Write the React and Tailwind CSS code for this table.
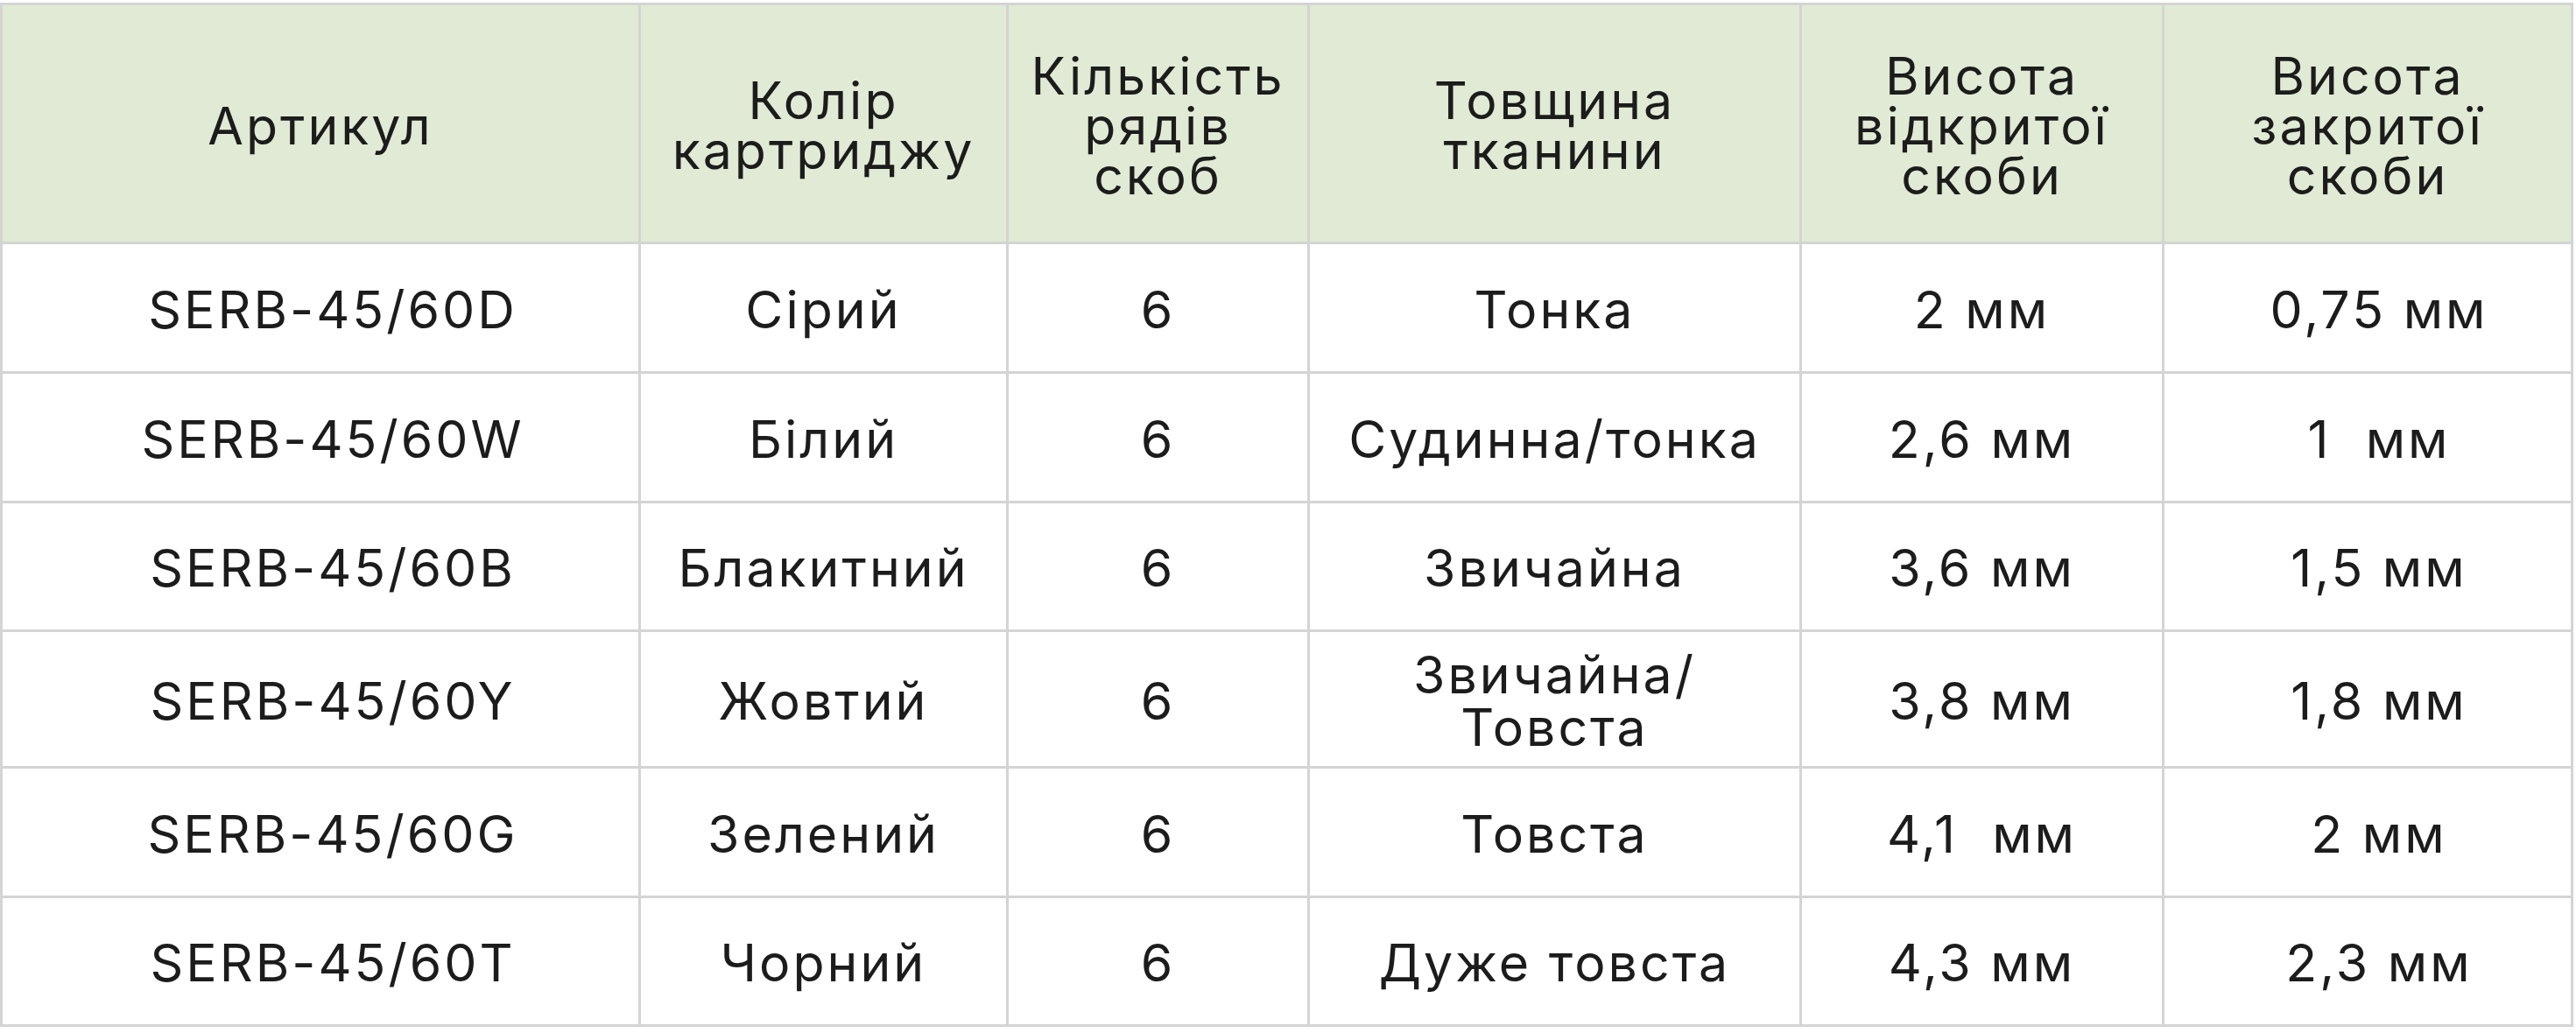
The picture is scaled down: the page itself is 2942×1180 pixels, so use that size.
import React from 'react';

const HEADERS = [
  ['Артикул'],
  ['Колір', 'картриджу'],
  ['Кількість', 'рядів', 'скоб'],
  ['Товщина', 'тканини'],
  ['Висота', 'відкритої', 'скоби'],
  ['Висота', 'закритої', 'скоби'],
];

const ROWS = [
  ['SERB-45/60D', 'Сірий', '6', ['Тонка'], '2 мм', '0,75 мм'],
  ['SERB-45/60W', 'Білий', '6', ['Судинна/тонка'], '2,6 мм', '1  мм'],
  ['SERB-45/60B', 'Блакитний', '6', ['Звичайна'], '3,6 мм', '1,5 мм'],
  ['SERB-45/60Y', 'Жовтий', '6', ['Звичайна/', 'Товста'], '3,8 мм', '1,8 мм'],
  ['SERB-45/60G', 'Зелений', '6', ['Товста'], '4,1  мм', '2 мм'],
  ['SERB-45/60T', 'Чорний', '6', ['Дуже товста'], '4,3 мм', '2,3 мм'],
];

// offsets seen in the source table: first and last data columns sit a bit right of centre
const DATA_PAD = ['pl-[28px]', '', '', '', '', 'pl-[26px]'];

export default function App() {
  return (
    <div className="bg-white w-[2942px] h-[1180px] pt-[3px] font-['Inter','Noto_Sans',sans-serif] text-[59px] tracking-[3px] text-[#1c1c1c]">
      <div className="grid w-[2939px] grid-cols-[726px_417px_341px_559px_411px_464px] grid-rows-[270px_145px_145px_144px_153px_145px_144px] gap-[3px] p-[3px] bg-[#d4d4d4]">
        {HEADERS.map((lines, i) => (
          <div key={'h' + i} className="bg-[#e0ead4] flex flex-col items-center justify-center text-center leading-[57px] pt-1">
            {lines.map(l => <span key={l}>{l}</span>)}
          </div>
        ))}
        {ROWS.map((row, r) =>
          row.map((cell, c) => (
            <div key={r + '-' + c}
              className={`bg-white flex flex-col items-center justify-center text-center whitespace-pre leading-[60px] pt-1 ${DATA_PAD[c]}`}>
              {Array.isArray(cell) ? cell.map(l => <span key={l}>{l}</span>) : <span>{cell}</span>}
            </div>
          ))
        )}
      </div>
    </div>
  );
}
